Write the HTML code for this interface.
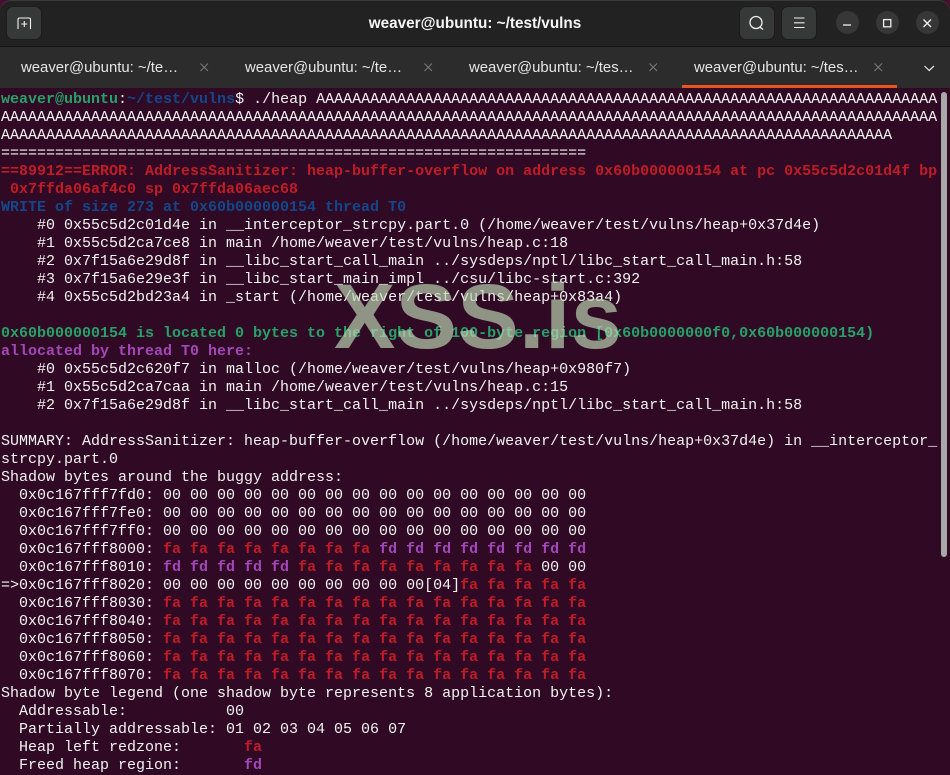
<!DOCTYPE html>
<html><head><meta charset="utf-8">
<style>
html,body{margin:0;padding:0;width:950px;height:775px;overflow:hidden;background:#300a24}
#corner{position:absolute;left:0;top:0;width:950px;height:20px;background:#4a0e33}
#head{position:absolute;left:0;top:0;width:950px;height:47px;background:#222;border-radius:11px 11px 0 0;box-shadow:inset 0 1px 0 #3a3a3a;border-bottom:1px solid #141414;box-sizing:border-box}
#tabs{position:absolute;left:0;top:47px;width:950px;height:41px;background:#2c2c2c}
#term{position:absolute;left:0;top:88px;width:950px;height:687px;background:#300a24;overflow:hidden}
#title{position:absolute;left:0;width:950px;top:15px;text-align:center;color:#f5f5f5;font:bold 15.3px/18px "Liberation Sans",sans-serif}
.btn{position:absolute;top:7px;width:34px;height:32px;background:#373838;border-radius:6px;box-shadow:0 0 0 1px #1c1c1c}
.cir{position:absolute;top:11.2px;width:23px;height:23px;border-radius:50%;background:#373737}
svg{position:absolute;overflow:visible}
.t{position:absolute;top:12px;color:#e6e6e6;font:14.9px/18px "Liberation Sans",sans-serif;white-space:nowrap}
pre{position:absolute;left:1px;top:3px;margin:0;color:#f2f2f2;font:15px/18px "Liberation Mono",monospace;white-space:pre}
b{font-weight:bold}
.r{color:#c01c28}.g{color:#26a269}.u{color:#12488b}.p{color:#a347ba}
#wm{position:absolute;left:334px;top:267px;color:#bcd6b4;opacity:.68;font:bold 92px/100px "Liberation Sans",sans-serif;letter-spacing:.3px;white-space:nowrap}
#sb{position:absolute;left:941px;top:92px;width:6px;height:465px;background:#a8a8a8;border-radius:3px}
</style></head><body>
<div id="corner"></div>
<div id="head">
<div class="btn" style="left:7px"></div>
<svg style="left:17px;top:16px" width="15" height="15" fill="none" stroke="#f2f2f2" stroke-width="1.1"><path d="M1 13V3.5Q1 2 2.5 2H12Q13.5 2 13.5 3.5V13M7.3 5v6M4.3 8h6"/></svg>
<div id="title">weaver@ubuntu: ~/test/vulns</div>
<div class="btn" style="left:740px"></div>
<svg style="left:749px;top:15px" width="16" height="16" fill="none" stroke="#eee" stroke-width="1.3"><circle cx="7" cy="7.5" r="6"/><path d="M10.8 12L14 14.5"/></svg>
<div class="btn" style="left:782px"></div>
<svg style="left:794px;top:17px" width="11" height="12" fill="none" stroke="#eee" stroke-width="1.1"><path d="M0 1H10.5M0 5.8H10.5M0 10.5H10.5"/></svg>
<div class="cir" style="left:835.5px"></div>
<svg style="left:843px;top:23px" width="9" height="4"><path d="M0 2H8" stroke="#eee" stroke-width="1.3"/></svg>
<div class="cir" style="left:875.5px"></div>
<svg style="left:883px;top:19px" width="9" height="9" fill="none" stroke="#eee" stroke-width="1.3"><rect x=".6" y=".6" width="7.2" height="7.2"/></svg>
<div class="cir" style="left:915.5px"></div>
<svg style="left:923px;top:19px" width="9" height="9" fill="none" stroke="#eee" stroke-width="1.4"><path d="M.5 .5L8 8M8 .5L.5 8"/></svg>
</div>
<div id="tabs">
<div class="t" style="left:21px">weaver@ubuntu: ~/te…</div>
<svg style="left:200px;top:16px" width="9" height="9" stroke="#777" stroke-width="1.1"><path d="M.5 .5L8 8M8 .5L.5 8"/></svg>
<div class="t" style="left:245px">weaver@ubuntu: ~/te…</div>
<svg style="left:424px;top:16px" width="9" height="9" stroke="#777" stroke-width="1.1"><path d="M.5 .5L8 8M8 .5L.5 8"/></svg>
<div class="t" style="left:469px">weaver@ubuntu: ~/tes…</div>
<svg style="left:649px;top:16px" width="9" height="9" stroke="#777" stroke-width="1.1"><path d="M.5 .5L8 8M8 .5L.5 8"/></svg>
<div class="t" style="left:694px">weaver@ubuntu: ~/tes…</div>
<svg style="left:874px;top:16px" width="9" height="9" stroke="#777" stroke-width="1.1"><path d="M.5 .5L8 8M8 .5L.5 8"/></svg>
<svg style="left:924px;top:18px" width="11" height="7" fill="none" stroke="#e6e6e6" stroke-width="1.2"><path d="M.5 1L5.2 5.5L10 1"/></svg>
</div>
<div style="position:absolute;left:682px;top:85px;width:215px;height:3px;background:#e95420"></div>
<div id="term">
<pre><b class="g">weaver@ubuntu</b>:<b class="u">~/test/vulns</b>$ ./heap AAAAAAAAAAAAAAAAAAAAAAAAAAAAAAAAAAAAAAAAAAAAAAAAAAAAAAAAAAAAAAAAAAAAA
AAAAAAAAAAAAAAAAAAAAAAAAAAAAAAAAAAAAAAAAAAAAAAAAAAAAAAAAAAAAAAAAAAAAAAAAAAAAAAAAAAAAAAAAAAAAAAAAAAAAAAAA
AAAAAAAAAAAAAAAAAAAAAAAAAAAAAAAAAAAAAAAAAAAAAAAAAAAAAAAAAAAAAAAAAAAAAAAAAAAAAAAAAAAAAAAAAAAAAAAAAAA
=================================================================
<b class="r">==89912==ERROR: AddressSanitizer: heap-buffer-overflow on address 0x60b000000154 at pc 0x55c5d2c01d4f bp</b>
<b class="r"> 0x7ffda06af4c0 sp 0x7ffda06aec68</b>
<b class="u">WRITE of size 273 at 0x60b000000154 thread T0</b>
    #0 0x55c5d2c01d4e in __interceptor_strcpy.part.0 (/home/weaver/test/vulns/heap+0x37d4e)
    #1 0x55c5d2ca7ce8 in main /home/weaver/test/vulns/heap.c:18
    #2 0x7f15a6e29d8f in __libc_start_call_main ../sysdeps/nptl/libc_start_call_main.h:58
    #3 0x7f15a6e29e3f in __libc_start_main_impl ../csu/libc-start.c:392
    #4 0x55c5d2bd23a4 in _start (/home/weaver/test/vulns/heap+0x83a4)

<b class="g">0x60b000000154 is located 0 bytes to the right of 100-byte region [0x60b0000000f0,0x60b000000154)</b>
<b class="p">allocated by thread T0 here:</b>
    #0 0x55c5d2c620f7 in malloc (/home/weaver/test/vulns/heap+0x980f7)
    #1 0x55c5d2ca7caa in main /home/weaver/test/vulns/heap.c:15
    #2 0x7f15a6e29d8f in __libc_start_call_main ../sysdeps/nptl/libc_start_call_main.h:58

SUMMARY: AddressSanitizer: heap-buffer-overflow (/home/weaver/test/vulns/heap+0x37d4e) in __interceptor_
strcpy.part.0
Shadow bytes around the buggy address:
  0x0c167fff7fd0: 00 00 00 00 00 00 00 00 00 00 00 00 00 00 00 00
  0x0c167fff7fe0: 00 00 00 00 00 00 00 00 00 00 00 00 00 00 00 00
  0x0c167fff7ff0: 00 00 00 00 00 00 00 00 00 00 00 00 00 00 00 00
  0x0c167fff8000: <b class="r">fa fa fa fa fa fa fa fa</b> <b class="p">fd fd fd fd fd fd fd fd</b>
  0x0c167fff8010: <b class="p">fd fd fd fd fd</b> <b class="r">fa fa fa fa fa fa fa fa fa</b> 00 00
=&gt;0x0c167fff8020: 00 00 00 00 00 00 00 00 00 00[04]<b class="r">fa fa fa fa fa</b>
  0x0c167fff8030: <b class="r">fa fa fa fa fa fa fa fa fa fa fa fa fa fa fa fa</b>
  0x0c167fff8040: <b class="r">fa fa fa fa fa fa fa fa fa fa fa fa fa fa fa fa</b>
  0x0c167fff8050: <b class="r">fa fa fa fa fa fa fa fa fa fa fa fa fa fa fa fa</b>
  0x0c167fff8060: <b class="r">fa fa fa fa fa fa fa fa fa fa fa fa fa fa fa fa</b>
  0x0c167fff8070: <b class="r">fa fa fa fa fa fa fa fa fa fa fa fa fa fa fa fa</b>
Shadow byte legend (one shadow byte represents 8 application bytes):
  Addressable:           00
  Partially addressable: 01 02 03 04 05 06 07
  Heap left redzone:       <b class="r">fa</b>
  Freed heap region:       <b class="p">fd</b></pre>
</div>
<div id="wm">XSS.is</div>
<div id="sb"></div>
</body></html>
